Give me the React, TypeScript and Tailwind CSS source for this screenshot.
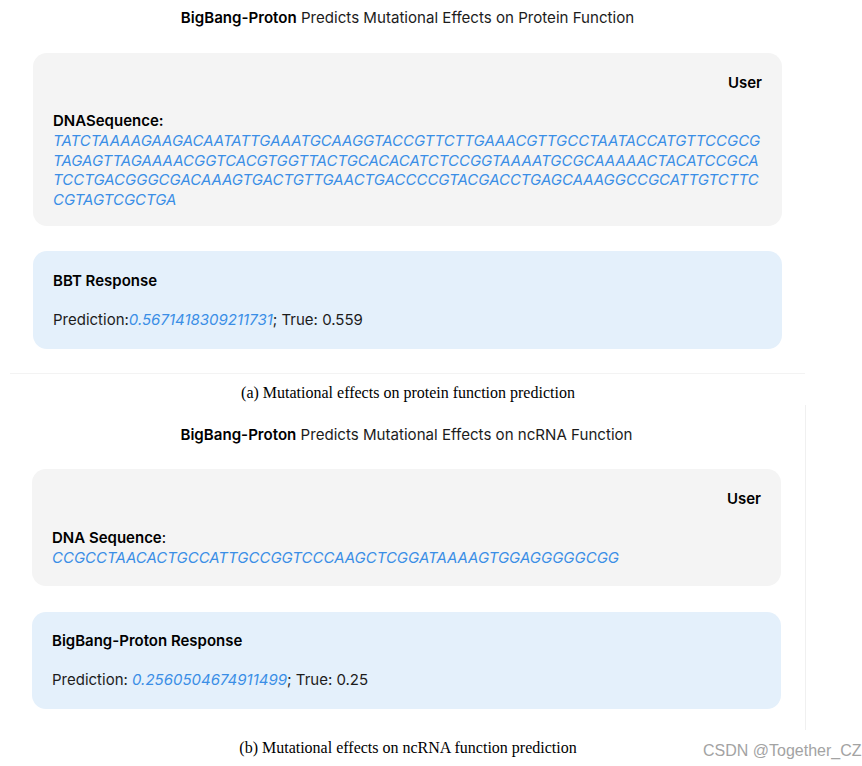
const inter = "font-['Inter','Noto_Sans',sans-serif]";
const serif = "font-['Liberation_Serif','Times_New_Roman',serif]";

const proteinSeq = [
  "TATCTAAAAGAAGACAATATTGAAATGCAAGGTACCGTTCTTGAAACGTTGCCTAATACCATGTTCCGCG",
  "TAGAGTTAGAAAACGGTCACGTGGTTACTGCACACATCTCCGGTAAAATGCGCAAAAACTACATCCGCA",
  "TCCTGACGGGCGACAAAGTGACTGTTGAACTGACCCCGTACGACCTGAGCAAAGGCCGCATTGTCTTC",
  "CGTAGTCGCTGA",
];

function Title({ rest }: { rest: string }) {
  return (
    <div className="h-[20px] text-center text-[15.1px] leading-[20px] text-[#1c1c1c]">
      <span className="font-semibold text-black">BigBang-Proton</span> {rest}
    </div>
  );
}

function UserCard({
  label,
  colon,
  lines,
  className,
}: {
  label: string;
  colon: boolean;
  lines: string[];
  className?: string;
}) {
  return (
    <div className={`rounded-[14px] bg-[#f4f4f4] px-5 pt-5 ${className ?? ""}`}>
      <div className="text-right text-[15px] font-semibold leading-[20px] text-black">User</div>
      <div className="text-[15px] leading-[20px] text-black">
        <span className="font-semibold">{label}</span>
        {colon ? <span className="font-semibold">:</span> : ":"}
      </div>
      <div className="text-[15px] italic leading-[19.5px] text-[#3a8ee6]">
        {lines.map((l) => (
          <div key={l}>{l}</div>
        ))}
      </div>
    </div>
  );
}

function ResponseCard({
  title,
  value,
  truth,
  spaced,
  className,
}: {
  title: string;
  value: string;
  truth: string;
  spaced: boolean;
  className?: string;
}) {
  return (
    <div className={`rounded-[14px] bg-[#e4f0fb] px-5 ${className ?? ""}`}>
      <div className="text-[15px] font-semibold leading-[20px] text-black">{title}</div>
      <div className="mt-[19px] text-[15px] leading-[20px] text-[#1c1c1c]">
        Prediction:{spaced ? " " : ""}
        <span className="italic text-[#3a8ee6]">{value}</span>; True: {truth}
      </div>
    </div>
  );
}

export default function App() {
  return (
    <div className={`relative h-[766px] w-[862px] overflow-hidden bg-white pt-[8px] ${inter}`}>
      {/* panel (a) */}
      <div className="ml-[10px] w-[795px] border-b border-[#f3f3f3] pb-[24px]">
        <div className="ml-[23px] w-[749px]">
          <Title rest="Predicts Mutational Effects on Protein Function" />
          <UserCard
            className="mt-[25px] pb-[17px] [&>div:nth-child(2)]:mt-[18px]"
            label="DNASequence"
            colon={true}
            lines={proteinSeq}
          />
          <ResponseCard
            className="mt-[25px] pt-5 pb-[19px]"
            title="BBT Response"
            value="0.5671418309211731"
            truth="0.559"
            spaced={false}
          />
        </div>
      </div>
      <div className={`ml-[10px] mt-[9px] w-[796px] text-center text-[16px] leading-[20px] text-black ${serif}`}>
        (a) Mutational effects on protein function prediction
      </div>

      {/* panel (b) */}
      <div className="ml-[10px] mt-[2px] w-[796px] border-r border-[#f0f0f0] pt-[20px] pb-[21px]">
        <div className="ml-[22px] w-[749px]">
          <Title rest="Predicts Mutational Effects on ncRNA Function" />
          <UserCard
            className="mt-[24px] pb-[18px] [&>div:nth-child(2)]:mt-[19px]"
            label="DNA Sequence"
            colon={false}
            lines={["CCGCCTAACACTGCCATTGCCGGTCCCAAGCTCGGATAAAAGTGGAGGGGGCGG"]}
          />
          <ResponseCard
            className="mt-[26px] pt-[19px] pb-[19px]"
            title="BigBang-Proton Response"
            value="0.2560504674911499"
            truth="0.25"
            spaced={true}
          />
        </div>
      </div>
      <div className={`ml-[10px] mt-[8px] w-[796px] text-center text-[16px] leading-[20px] text-black ${serif}`}>
        (b) Mutational effects on ncRNA function prediction
      </div>

      <div className="absolute left-[703px] top-[741px] whitespace-nowrap font-['Liberation_Sans',Arial,sans-serif] text-[16px] leading-[20px] text-[#a3a3a3]">
        CSDN @Together_CZ
      </div>
    </div>
  );
}
